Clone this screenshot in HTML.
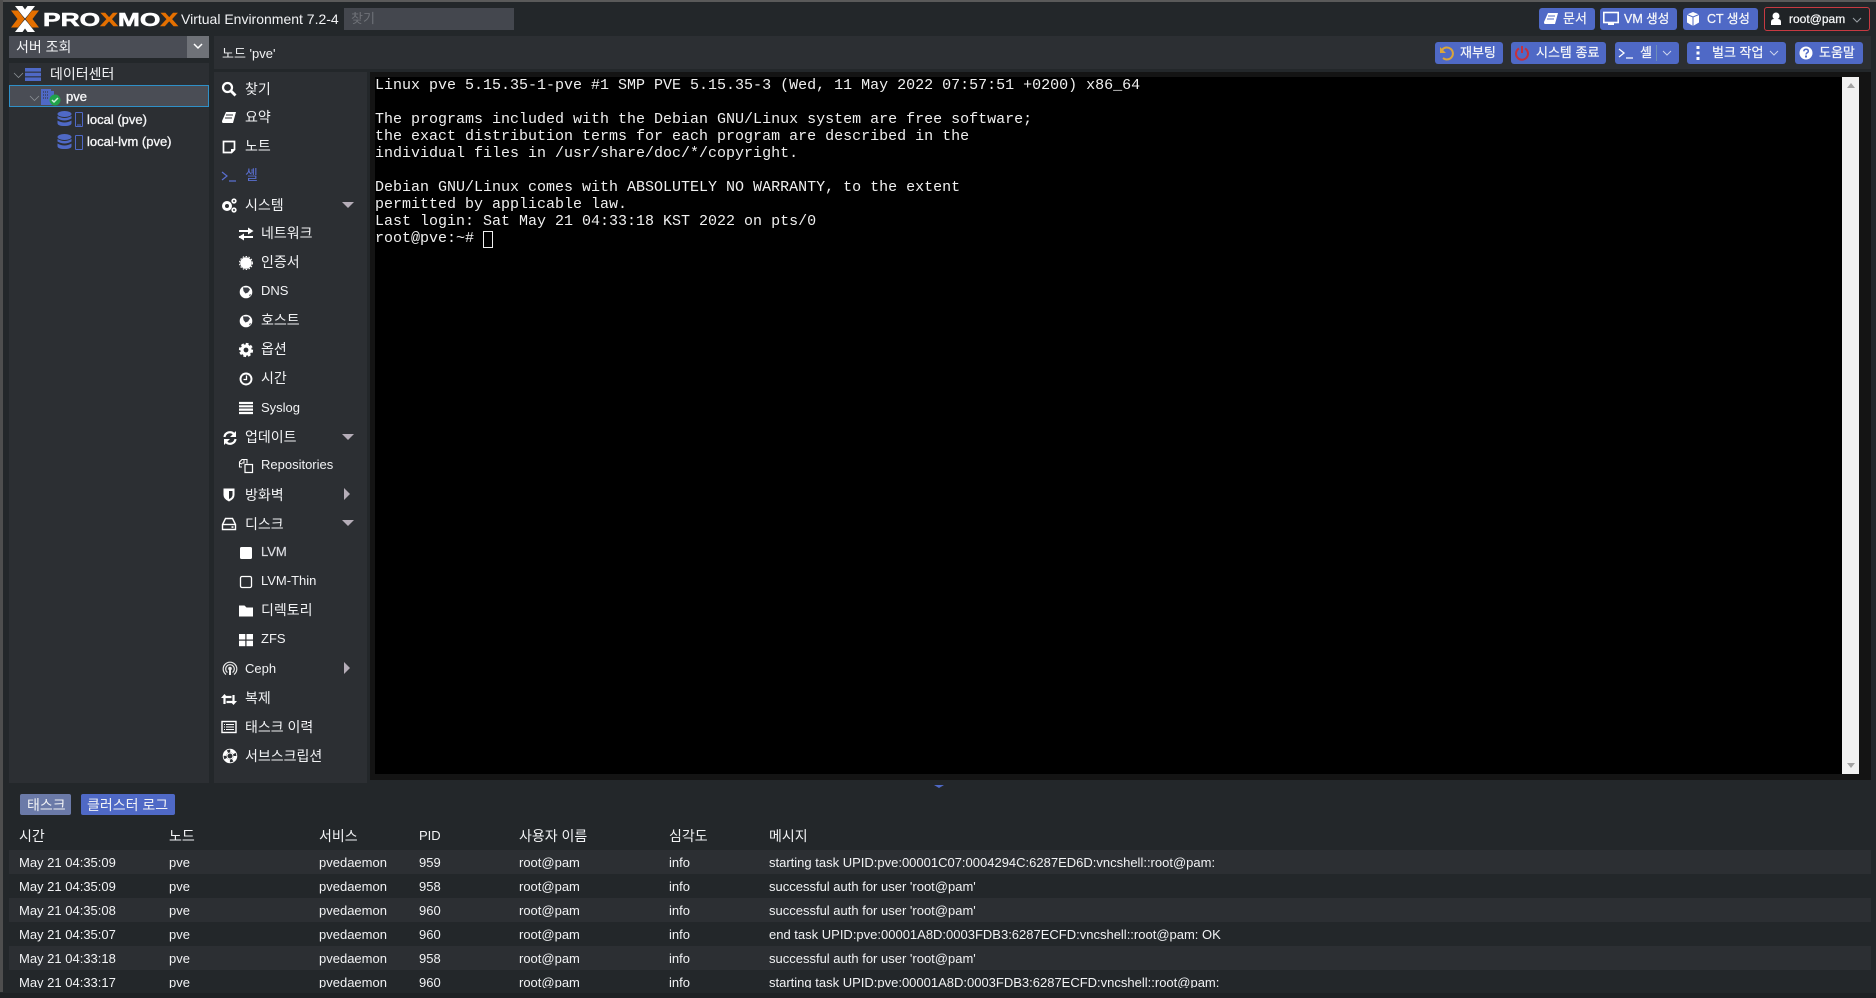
<!DOCTYPE html>
<html lang="ko"><head><meta charset="utf-8"><title>pve - Proxmox Virtual Environment</title>
<style>
html,body{margin:0;padding:0;width:1876px;height:998px;overflow:hidden;background:#23272a}
body{position:relative;font:13px/16px "Liberation Sans","Noto Sans CJK KR",sans-serif;color:#f2f3f5}
.a,.t,svg.i,.b{position:absolute}
.t{white-space:nowrap;transform:translateY(-50%)}
.k{font-size:14px}
.p{position:absolute;background:#2c2f33}
.b{background:#4f69c6;border-radius:3px;height:22px;top:8px}
.s{-webkit-text-stroke:.3px #fff}
.h{font-size:12px;-webkit-text-stroke:.25px #fff}
.hk{font-size:13px;-webkit-text-stroke:.2px #fff}
svg.i{width:16px;height:16px;overflow:visible}
.r{position:absolute;left:9px;width:1862px;height:24px}
pre{position:absolute;left:375px;top:77px;margin:0;font:15px/17px "Liberation Mono",monospace;color:#f0f0f0;white-space:pre}
.arr{position:absolute;width:0;height:0}
.down{border-left:6px solid transparent;border-right:6px solid transparent;border-top:6px solid #b5adb8}
.right{border-top:6px solid transparent;border-bottom:6px solid transparent;border-left:6px solid #b5adb8}
</style></head><body>

<div class="a" style="left:0;top:0;width:1876px;height:2px;background:#5a5a5a"></div>
<div class="a" style="left:0;top:0;width:3px;height:992px;background:#4e4e4e"></div>
<div class="a" style="left:0;top:993px;width:1876px;height:5px;background:#1e2124"></div>

<!-- logo -->
<svg class="a" style="left:11px;top:6px" width="170" height="27" viewBox="0 0 170 27">
<path d="M0 4.500h7l6.500 8.500L7 21.500H0L6.500 13zM28 4.500h-7L14.500 13l6.500 8.500h7L21.500 13z" fill="#e57000"/>
<path d="M4 0h7.500L14 3.500 16.500 0H24l-7 9-3 3.500L11 9zM4 26h7.500L14 22.500l2.500 3.500H24l-7-9-3-3.500L11 17z" fill="#fff"/>
<text y="20" x="32" font-family="Liberation Sans" font-weight="700" font-size="18" textLength="135" lengthAdjust="spacingAndGlyphs" stroke-width=".5" fill="#fff" stroke="#fff">PRO<tspan fill="#e57000" stroke="#e57000">X</tspan>MO<tspan fill="#e57000" stroke="#e57000">X</tspan></text>
</svg>
<div class="t" style="left:181px;top:19px;font-size:14px">Virtual Environment 7.2-4</div>
<div class="a" style="left:344px;top:8px;width:170px;height:22px;background:#44474e"></div>
<div class="t" style="left:351px;top:19px;color:#6f7278;font-size:13px">찾기</div>

<!-- top buttons -->
<div class="b" style="left:1539px;width:56px"></div>
<svg class="i" style="left:1543px;top:11px" viewBox="0 0 16 16"><path d="M5 2h10l-3 11H2q-1 0-1-2z" fill="#fff"/><path d="M5 5h7M4 8h7" stroke="#4f69c6"/></svg>
<div class="t hk" style="left:1563px;top:19px">문서</div>
<div class="b" style="left:1600px;width:77px"></div>
<svg class="i" style="left:1603px;top:11px" viewBox="0 0 16 16"><rect x=".8" y="1.500" width="14.400" height="10" fill="none" stroke="#fff" stroke-width="1.600"/><path d="M5 14h6v-2H5z" fill="#fff"/></svg>
<div class="t h" style="left:1624px;top:19px;font-size:12.500px">VM 생성</div>
<div class="b" style="left:1683px;width:75px"></div>
<svg class="i" style="left:1685px;top:11px" viewBox="0 0 16 16"><path d="M8 1l6 2.500v8L8 15l-6-3.500v-8z" fill="#fff"/><path d="M2 3.500L8 6l6-2.500M8 6v9" stroke="#4f69c6" fill="none"/></svg>
<div class="t h" style="left:1707px;top:19px;font-size:12.500px">CT 생성</div>
<div class="a" style="left:1764px;top:7px;width:104px;height:22px;border:1px solid #c73a42;border-radius:3px;background:#1f2326"></div>
<svg class="i" style="left:1768px;top:11px" viewBox="0 0 16 16"><circle cx="8" cy="5" r="3.500" fill="#fff"/><path d="M3 14v-3q0-3 3-3h4q3 0 3 3v3z" fill="#fff"/></svg>
<div class="t h" style="left:1789px;top:19px">root@pam</div>
<svg class="i" style="left:1849px;top:12px" viewBox="0 0 16 16"><path d="M4 6l4 4 4-4" fill="none" stroke="#9aa0a6"/></svg>

<!-- left tree -->
<div class="a" style="left:9px;top:36px;width:178px;height:22px;background:#4a4d55"></div>
<div class="a" style="left:187px;top:36px;width:22px;height:22px;background:#6f7278"></div>
<svg class="i" style="left:190px;top:38px" viewBox="0 0 16 16"><path d="M4 6l4 4 4-4" fill="none" stroke="#fff" stroke-width="1.500"/></svg>
<div class="t k" style="left:16px;top:47px">서버 조회</div>
<div class="p" style="left:9px;top:63px;width:200px;height:720px"></div>
<div class="a" style="left:9px;top:85px;width:198px;height:20px;background:#4a4d55;border:1px solid #2f90c8"></div>
<svg class="i" style="left:11px;top:67px" viewBox="0 0 16 16"><path d="M3 6l4.500 4.500L12 6" fill="none" stroke="#8a8f94" stroke-width=".8"/></svg>
<svg class="i" style="left:25px;top:66px" viewBox="0 0 16 16"><g fill="#4f69c6"><rect y="2" width="16" height="3.600"/><rect y="6.700" width="16" height="3.600"/><rect y="11.400" width="16" height="3.600"/></g></svg>
<div class="t k" style="left:50px;top:74px">데이터센터</div>
<svg class="i" style="left:27px;top:90px" viewBox="0 0 16 16"><path d="M3 6l4.500 4.500L12 6" fill="none" stroke="#8a8f94" stroke-width=".8"/></svg>
<svg class="i" style="left:41px;top:89px" viewBox="0 0 16 16"><path d="M0 0h10v2h3v14H0z" fill="#4f69c6"/><path d="M2 3h6M2 6h6M2 9h6" stroke="#2c2f33" stroke-dasharray="1 1"/></svg>
<svg class="a" style="left:49px;top:94px" width="12" height="12" viewBox="0 0 12 12"><circle cx="6" cy="6" r="5.500" fill="#21a34a"/><path d="M3 6l2 2 4-4" fill="none" stroke="#cfeedd" stroke-width="1.500"/></svg>
<div class="t s" style="left:66px;top:97px">pve</div>
<svg class="a" style="left:57px;top:111px" width="26" height="17" viewBox="0 0 26 17"><g fill="#4f69c6"><ellipse cx="7.500" cy="3" rx="7" ry="3"/><path d="M.5 5q7 4 14 0v2.500q-7 4-14 0zM.5 9.500q7 4 14 0V12q0 3-7 3T.5 12z"/></g><rect x="18.500" y="1.500" width="7" height="14" rx=".5" fill="none" stroke="#4f69c6"/><path d="M20 14h4" stroke="#4f69c6"/></svg>
<div class="t s" style="left:87px;top:120px">local (pve)</div>
<svg class="a" style="left:57px;top:134px" width="26" height="17" viewBox="0 0 26 17"><g fill="#4f69c6"><ellipse cx="7.500" cy="3" rx="7" ry="3"/><path d="M.5 5q7 4 14 0v2.500q-7 4-14 0zM.5 9.500q7 4 14 0V12q0 3-7 3T.5 12z"/></g><rect x="18.500" y="1.500" width="7" height="14" rx=".5" fill="none" stroke="#4f69c6"/></svg>
<div class="t s" style="left:87px;top:142px">local-lvm (pve)</div>

<!-- title bar -->
<div class="p" style="left:214px;top:36px;width:1657px;height:33px"></div>
<div class="t" style="left:222px;top:54px">노드 'pve'</div>

<div class="b" style="left:1435px;top:42px;width:68px"></div>
<svg class="i" style="left:1439px;top:45px" viewBox="0 0 16 16"><path d="M3 5A6 6 0 1 1 4 13" fill="none" stroke="#d9a53a" stroke-width="2"/><path d="M1 2v6h6z" fill="#d9a53a"/></svg>
<div class="t hk" style="left:1460px;top:53px">재부팅</div>
<div class="b" style="left:1511px;top:42px;width:95px"></div>
<svg class="i" style="left:1514px;top:45px" viewBox="0 0 16 16"><path d="M5 3.500a6 6 0 1 0 6 0" fill="none" stroke="#c6303c" stroke-width="2"/><path d="M8 1v7" stroke="#c6303c" stroke-width="2"/></svg>
<div class="t hk" style="left:1536px;top:53px">시스템 종료</div>
<div class="b" style="left:1615px;top:42px;width:64px"></div>
<svg class="i" style="left:1618px;top:45px" viewBox="0 0 16 16"><path d="M1 4l5 4-5 4M8 13h7" fill="none" stroke="#fff" stroke-width="1.300"/></svg>
<div class="t hk" style="left:1640px;top:53px">셸</div>
<div class="a" style="left:1656px;top:45px;width:1px;height:16px;background:#6f8fb8"></div>
<svg class="i" style="left:1659px;top:45px" viewBox="0 0 16 16"><path d="M4 6l4 4 4-4" fill="none" stroke="#cdd5ee"/></svg>
<div class="b" style="left:1687px;top:42px;width:99px"></div>
<svg class="i" style="left:1690px;top:45px" viewBox="0 0 16 16"><g fill="#fff"><rect x="6.500" y="1" width="3" height="3"/><rect x="6.500" y="6.500" width="3" height="3"/><rect x="6.500" y="12" width="3" height="3"/></g></svg>
<div class="t hk" style="left:1712px;top:53px">벌크 작업</div>
<svg class="i" style="left:1766px;top:45px" viewBox="0 0 16 16"><path d="M4 6l4 4 4-4" fill="none" stroke="#cdd5ee"/></svg>
<div class="b" style="left:1795px;top:42px;width:68px"></div>
<svg class="i" style="left:1798px;top:45px" viewBox="0 0 16 16"><circle cx="8" cy="8" r="6.500" fill="#fff"/><path d="M5.800 6.300Q6 4.300 8 4.300q2.300 0 2.300 1.900C10.300 7.800 8 7.800 8 9.500" fill="none" stroke="#4f69c6" stroke-width="1.500"/><rect x="7" y="10.500" width="2" height="2" fill="#4f69c6"/></svg>
<div class="t hk" style="left:1819px;top:53px">도움말</div>

<!-- side menu -->
<div class="p" style="left:214px;top:72px;width:153px;height:711px"></div>
<div class="a" style="left:0;top:1px">

<svg class="i" style="left:221px;top:80px" viewBox="0 0 16 16"><circle cx="6.500" cy="6.500" r="4.500" fill="none" stroke="#fff" stroke-width="2.200"/><path d="M10 10l4.500 4.500" stroke="#fff" stroke-width="2.800"/></svg>
<div class="t k" style="left:245px;top:88px">찾기</div>
<svg class="i" style="left:221px;top:109px" viewBox="0 0 16 16"><path d="M5 2h10l-3 11H2q-1 0-1-2z" fill="#fff"/><path d="M5 5h7M4 8h7" stroke="#2c2f33"/></svg>
<div class="t k" style="left:245px;top:116px">요약</div>
<svg class="i" style="left:221px;top:138px" viewBox="0 0 16 16"><path d="M2.500 2.500h11v8l-3 3h-8z" fill="none" stroke="#fff" stroke-width="1.700"/><path d="M10 14v-4h4" fill="#fff"/></svg>
<div class="t k" style="left:245px;top:145px">노트</div>
<svg class="i" style="left:221px;top:167px" viewBox="0 0 16 16"><path d="M1 4l5 4-5 4M8 13h7" fill="none" stroke="#5a6fd0" stroke-width="1.200"/></svg>
<div class="t k" style="left:245px;top:174px;color:#5a6fd0">셸</div>

<svg class="i" style="left:221px;top:196px" viewBox="0 0 16 16"><circle cx="6" cy="9" r="3.500" fill="none" stroke="#fff" stroke-width="3"/><circle cx="13" cy="4" r="1.800" fill="none" stroke="#fff" stroke-width="1.700"/><circle cx="13" cy="13" r="1.800" fill="none" stroke="#fff" stroke-width="1.700"/></svg>
<div class="t k" style="left:245px;top:204px">시스템</div>
<div class="arr down" style="left:342px;top:201px"></div>

<svg class="i" style="left:238px;top:225px" viewBox="0 0 16 16"><path d="M1 5h10M1 11h14" stroke="#fff" stroke-width="2"/><path d="M10 1.500L15.500 5 10 8.500zM6 7.500L.5 11 6 14.500z" fill="#fff"/></svg>
<div class="t k" style="left:261px;top:232px">네트워크</div>
<svg class="i" style="left:238px;top:254px" viewBox="0 0 16 16"><circle cx="8" cy="8" r="5.800" fill="#fff"/><circle cx="8" cy="8" r="6.500" fill="none" stroke="#fff" stroke-dasharray="1.500 1.500"/></svg>
<div class="t k" style="left:261px;top:261px">인증서</div>
<svg class="i" style="left:238px;top:283px" viewBox="0 0 16 16"><circle cx="8" cy="8" r="6.300" fill="#fff"/><path d="M5 3.500h5l2 2-2 3-2.500 1-2-2.500zM11 11l2-1-1 2.500z" fill="#3a3d44"/></svg>
<div class="t" style="left:261px;top:290px">DNS</div>
<svg class="i" style="left:238px;top:312px" viewBox="0 0 16 16"><circle cx="8" cy="8" r="6.300" fill="#fff"/><path d="M5 3.500h5l2 2-2 3-2.500 1-2-2.500zM11 11l2-1-1 2.500z" fill="#3a3d44"/></svg>
<div class="t k" style="left:261px;top:319px">호스트</div>
<svg class="i" style="left:238px;top:341px" viewBox="0 0 16 16"><circle cx="8" cy="8" r="4" fill="none" stroke="#fff" stroke-width="3.200"/><circle cx="8" cy="8" r="6.200" fill="none" stroke="#fff" stroke-width="1.800" stroke-dasharray="2.800 2"/></svg>
<div class="t k" style="left:261px;top:348px">옵션</div>
<svg class="i" style="left:238px;top:370px" viewBox="0 0 16 16"><circle cx="8" cy="8" r="5.500" fill="none" stroke="#fff" stroke-width="1.900"/><path d="M8.500 4.500v4H5.500" fill="none" stroke="#fff" stroke-width="1.300"/></svg>
<div class="t k" style="left:261px;top:377px">시간</div>
<svg class="i" style="left:238px;top:399px" viewBox="0 0 16 16"><path d="M1 3h14M1 6.300h14M1 9.600h14M1 13h14" stroke="#fff" stroke-width="2.200"/></svg>
<div class="t" style="left:261px;top:407px">Syslog</div>

<svg class="i" style="left:222px;top:429px" viewBox="0 0 16 16"><path d="M2.500 7A5.500 5.500 0 0 1 12 4M13.500 9A5.500 5.500 0 0 1 4 12" fill="none" stroke="#fff" stroke-width="2.200"/><path d="M14 1v6H8zM2 15V9h6z" fill="#fff"/></svg>
<div class="t k" style="left:245px;top:436px">업데이트</div>
<div class="arr down" style="left:342px;top:433px"></div>

<svg class="i" style="left:238px;top:457px" viewBox="0 0 16 16"><path d="M4 9H1.500V4L4 1.500h5v4" fill="none" stroke="#fff" stroke-width="1.100"/><path d="M7 6.500h7.500v8H7z" fill="none" stroke="#fff" stroke-width="1.200"/><path d="M4 6l-2.500-1M6 2v3H4" fill="none" stroke="#fff"/></svg>
<div class="t" style="left:261px;top:464px">Repositories</div>

<svg class="i" style="left:221px;top:486px" viewBox="0 0 16 16"><path d="M2.500 1.500h11V8q0 4-5.500 6.500Q2.500 12 2.500 8z" fill="#fff"/><path d="M8 4h3.500v4Q11.500 10.500 8 12z" fill="#2c2f33"/></svg>
<div class="t k" style="left:245px;top:494px">방화벽</div>
<div class="arr right" style="left:344px;top:487px"></div>

<svg class="i" style="left:221px;top:515px" viewBox="0 0 16 16"><path d="M4.500 2.500h7L14.500 8.500v5h-13v-5z" fill="none" stroke="#fff" stroke-width="1.400"/><path d="M1.500 8.500h13" stroke="#fff" stroke-width="1.400"/><rect x="10.500" y="10.300" width="2" height="1.500" fill="#fff"/></svg>
<div class="t k" style="left:245px;top:523px">디스크</div>
<div class="arr down" style="left:342px;top:519px"></div>

<svg class="i" style="left:238px;top:544px" viewBox="0 0 16 16"><rect x="2" y="2" width="12" height="12" rx="1.500" fill="#fff"/></svg>
<div class="t" style="left:261px;top:551px;color:#dcdde2;-webkit-text-stroke:.2px #dcdde2">LVM</div>
<svg class="i" style="left:238px;top:573px" viewBox="0 0 16 16"><rect x="2.500" y="2.500" width="11" height="11" rx="1.500" fill="none" stroke="#fff" stroke-width="1.300"/></svg>
<div class="t" style="left:261px;top:580px">LVM-Thin</div>
<svg class="i" style="left:238px;top:602px" viewBox="0 0 16 16"><path d="M1 2.500h5.500l2 2h6.500v9H1z" fill="#fff"/></svg>
<div class="t k" style="left:261px;top:609px">디렉토리</div>
<svg class="i" style="left:238px;top:631px" viewBox="0 0 16 16"><g fill="#fff"><rect x="1" y="2" width="6.300" height="5.500"/><rect x="8.500" y="2" width="6.500" height="5.500"/><rect x="1" y="8.700" width="6.300" height="5.500"/><rect x="8.500" y="8.700" width="6.500" height="5.500"/></g></svg>
<div class="t" style="left:261px;top:638px">ZFS</div>

<svg class="i" style="left:222px;top:660px" viewBox="0 0 16 16"><g fill="none" stroke="#e8e8e8" stroke-width="1.200"><path d="M4 13.500a6.800 6.800 0 1 1 8 0"/><path d="M5.500 11.500a4.300 4.300 0 1 1 5 0"/></g><circle cx="8" cy="7.500" r="1.800" fill="#e8e8e8"/><path d="M7 8v6h2V8z" fill="#e8e8e8"/></svg>
<div class="t" style="left:245px;top:668px">Ceph</div>
<div class="arr right" style="left:344px;top:661px"></div>

<svg class="i" style="left:221px;top:690px" viewBox="0 0 16 16"><path d="M3.500 13V6h7M12.500 4v7h-7" fill="none" stroke="#fff" stroke-width="2.200"/><path d="M0 7h7L3.500 3zM9 10h7l-3.500 4z" fill="#fff"/></svg>
<div class="t k" style="left:245px;top:697px">복제</div>

<svg class="i" style="left:221px;top:718px" viewBox="0 0 16 16"><rect x="1" y="2.500" width="14" height="11" fill="none" stroke="#fff" stroke-width="1.400"/><path d="M3 5.500h1M5 5.500h8M3 8h1M5 8h8M3 10.500h1M5 10.500h8" stroke="#fff"/></svg>
<div class="t k" style="left:245px;top:726px">태스크 이력</div>

<svg class="i" style="left:222px;top:747px" viewBox="0 0 16 16"><circle cx="8" cy="8" r="5.200" fill="none" stroke="#fff" stroke-width="3.200" stroke-dasharray="5.200 3"/><circle cx="8" cy="8" r="6.800" fill="none" stroke="#fff" stroke-width=".9"/><circle cx="8" cy="8" r="3" fill="none" stroke="#fff" stroke-width=".9"/></svg>
<div class="t k" style="left:245px;top:755px">서브스크립션</div>
</div>

<!-- terminal -->
<div class="a" style="left:370px;top:72px;width:1501px;height:708px;background:#141414"></div>
<div class="a" style="left:375px;top:77px;width:1467px;height:697px;background:#000"></div>
<div class="a" style="left:1842px;top:77px;width:17px;height:697px;background:#f1f1f1"></div>
<div class="arr" style="left:1847px;top:83px;border-left:4px solid transparent;border-right:4px solid transparent;border-bottom:5px solid #a3a3a3"></div>
<div class="arr" style="left:1847px;top:763px;border-left:4px solid transparent;border-right:4px solid transparent;border-top:5px solid #a3a3a3"></div>
<pre>Linux pve 5.15.35-1-pve #1 SMP PVE 5.15.35-3 (Wed, 11 May 2022 07:57:51 +0200) x86_64

The programs included with the Debian GNU/Linux system are free software;
the exact distribution terms for each program are described in the
individual files in /usr/share/doc/*/copyright.

Debian GNU/Linux comes with ABSOLUTELY NO WARRANTY, to the extent
permitted by applicable law.
Last login: Sat May 21 04:33:18 KST 2022 on pts/0
root@pve:~# </pre>
<div class="a" style="left:483px;top:231px;width:8px;height:15px;border:1px solid #f0f0f0"></div>

<!-- splitter marker -->
<div class="arr" style="left:934px;top:785px;border-left:5px solid transparent;border-right:5px solid transparent;border-top:3px solid #4f69c6"></div>

<!-- log -->
<div class="a" style="left:20px;top:794px;width:51px;height:21px;background:#6b7aa8;border-radius:2px"></div>
<div class="t k" style="left:27px;top:805px">태스크</div>
<div class="a" style="left:81px;top:794px;width:94px;height:21px;background:#4f69c6;border-radius:2px"></div>
<div class="t k" style="left:87px;top:805px">클러스터 로그</div>

<div class="r" style="top:850px;background:#2c2f33"></div>
<div class="r" style="top:898px;background:#2c2f33"></div>
<div class="r" style="top:946px;background:#2c2f33"></div>

<div class="a" style="left:0;top:1px">
<div class="t k" style="left:19px;top:835px">시간</div>
<div class="t k" style="left:169px;top:835px">노드</div>
<div class="t k" style="left:319px;top:835px">서비스</div>
<div class="t" style="left:419px;top:835px">PID</div>
<div class="t k" style="left:519px;top:835px">사용자 이름</div>
<div class="t k" style="left:669px;top:835px">심각도</div>
<div class="t k" style="left:769px;top:835px">메시지</div>
<div class="t" style="left:19px;top:862px">May 21 04:35:09</div><div class="t" style="left:169px;top:862px">pve</div><div class="t" style="left:319px;top:862px">pvedaemon</div><div class="t" style="left:419px;top:862px">959</div><div class="t" style="left:519px;top:862px">root@pam</div><div class="t" style="left:669px;top:862px">info</div><div class="t" style="left:769px;top:862px">starting task UPID:pve:00001C07:0004294C:6287ED6D:vncshell::root@pam:</div>
<div class="t" style="left:19px;top:886px">May 21 04:35:09</div><div class="t" style="left:169px;top:886px">pve</div><div class="t" style="left:319px;top:886px">pvedaemon</div><div class="t" style="left:419px;top:886px">958</div><div class="t" style="left:519px;top:886px">root@pam</div><div class="t" style="left:669px;top:886px">info</div><div class="t" style="left:769px;top:886px">successful auth for user 'root@pam'</div>
<div class="t" style="left:19px;top:910px">May 21 04:35:08</div><div class="t" style="left:169px;top:910px">pve</div><div class="t" style="left:319px;top:910px">pvedaemon</div><div class="t" style="left:419px;top:910px">960</div><div class="t" style="left:519px;top:910px">root@pam</div><div class="t" style="left:669px;top:910px">info</div><div class="t" style="left:769px;top:910px">successful auth for user 'root@pam'</div>
<div class="t" style="left:19px;top:934px">May 21 04:35:07</div><div class="t" style="left:169px;top:934px">pve</div><div class="t" style="left:319px;top:934px">pvedaemon</div><div class="t" style="left:419px;top:934px">960</div><div class="t" style="left:519px;top:934px">root@pam</div><div class="t" style="left:669px;top:934px">info</div><div class="t" style="left:769px;top:934px">end task UPID:pve:00001A8D:0003FDB3:6287ECFD:vncshell::root@pam: OK</div>
<div class="t" style="left:19px;top:958px">May 21 04:33:18</div><div class="t" style="left:169px;top:958px">pve</div><div class="t" style="left:319px;top:958px">pvedaemon</div><div class="t" style="left:419px;top:958px">958</div><div class="t" style="left:519px;top:958px">root@pam</div><div class="t" style="left:669px;top:958px">info</div><div class="t" style="left:769px;top:958px">successful auth for user 'root@pam'</div>
</div>
<div class="a" style="left:0;top:970px;width:1876px;height:18px;overflow:hidden">
<div class="t" style="left:19px;top:13px">May 21 04:33:17</div><div class="t" style="left:169px;top:13px">pve</div><div class="t" style="left:319px;top:13px">pvedaemon</div><div class="t" style="left:419px;top:13px">960</div><div class="t" style="left:519px;top:13px">root@pam</div><div class="t" style="left:669px;top:13px">info</div><div class="t" style="left:769px;top:13px">starting task UPID:pve:00001A8D:0003FDB3:6287ECFD:vncshell::root@pam:</div>
</div>
</body></html>
